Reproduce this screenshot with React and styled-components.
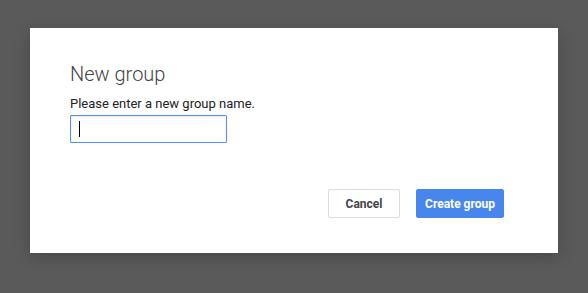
import React from "react";
import styled, { createGlobalStyle } from "styled-components";

const GlobalStyle = createGlobalStyle`
  html, body {
    margin: 0;
    padding: 0;
    background: #5a5a5a;
    font-family: Roboto, Arial, sans-serif;
  }
`;

const Backdrop = styled.div`
  width: 588px;
  height: 293px;
  padding: 28px 30px 0;
  box-sizing: border-box;
  background: #5a5a5a;
`;

const Dialog = styled.div`
  width: 528px;
  height: 225px;
  box-sizing: border-box;
  background: #fff;
  box-shadow: 0 4px 16px rgba(0, 0, 0, 0.2);
  padding: 34px 54px 35px 40px;
  display: flex;
  flex-direction: column;
`;

const Title = styled.h2`
  margin: 0;
  font-size: 20px;
  font-weight: 300;
  color: #444;
  line-height: 24px;
`;

const Label = styled.p`
  margin: 10px 0 3px;
  font-size: 13px;
  color: #222;
  line-height: 16px;
`;

const Field = styled.div`
  position: relative;
  width: 157px;
`;

const Input = styled.input`
  display: block;
  width: 157px;
  height: 28px;
  box-sizing: border-box;
  border: 1px solid #4d90fe;
  border-radius: 1px;
  outline: none;
  padding: 0 8px;
  font-family: inherit;
  font-size: 13px;
  box-shadow: inset 0 1px 2px rgba(0, 0, 0, 0.1);
`;

const Caret = styled.span`
  position: absolute;
  left: 9px;
  top: 6px;
  width: 1px;
  height: 16px;
  background: #000;
`;

const Actions = styled.div`
  margin-top: auto;
  display: flex;
  justify-content: flex-end;
  gap: 16px;
`;

const Button = styled.button`
  width: ${(p) => (p.$primary ? "88px" : "72px")};
  height: 29px;
  box-sizing: border-box;
  padding: 0;
  border-radius: 2px;
  font-family: inherit;
  font-size: 12px;
  font-weight: 700;
  cursor: pointer;
  border: 1px solid ${(p) => (p.$primary ? "#4787ed" : "#dcdcdc")};
  background: ${(p) => (p.$primary ? "#4787ed" : "#fff")};
  color: ${(p) => (p.$primary ? "#fff" : "#444")};
`;

export default function App() {
  return (
    <>
      <GlobalStyle />
      <Backdrop>
        <Dialog>
          <Title>New group</Title>
          <Label>Please enter a new group name.</Label>
          <Field>
            <Input type="text" />
            <Caret />
          </Field>
          <Actions>
            <Button>Cancel</Button>
            <Button $primary>Create group</Button>
          </Actions>
        </Dialog>
      </Backdrop>
    </>
  );
}
